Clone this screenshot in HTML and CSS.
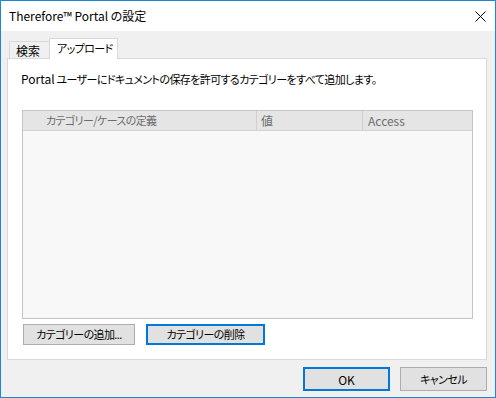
FILE: index.html
```html
<!DOCTYPE html>
<html lang="ja">
<head>
    <meta charset="UTF-8">
    <title>Therefore Portal の設定</title>
    <link rel="stylesheet" href="styles.css">
</head>
<body>
<div class="window">
    <div class="titlebar">
        <span class="title">Therefore™ Portal の設定</span>
        <svg class="close" width="11" height="11" viewBox="0 0 11 11">
            <path d="M0.5 0.5L10.5 10.5M10.5 0.5L0.5 10.5" stroke="#000" stroke-width="1" fill="none"/>
        </svg>
    </div>
    <div class="client">
        <div class="tabs">
            <div class="tab">検索</div>
            <div class="tab active">アップロード</div>
        </div>
        <div class="panel">
            <p class="intro"><span class="latin">Portal</span> ユーザーにドキュメントの保存を許可するカテゴリーをすべて追加します。</p>
            <div class="list">
                <div class="list-head">
                    <div class="col c1">カテゴリー/ケースの定義</div>
                    <div class="col c2">値</div>
                    <div class="col c3 latin">Access</div>
                </div>
                <div class="list-body"></div>
            </div>
            <div class="panel-buttons">
                <button class="btn add">カテゴリーの追加...</button>
                <button class="btn del focus">カテゴリーの削除</button>
            </div>
        </div>
        <div class="footer">
            <button class="btn big focus latin">OK</button>
            <button class="btn big">キャンセル</button>
        </div>
    </div>
</div>
</body>
</html>
```

FILE: styles.css
```css
*{margin:0;padding:0;box-sizing:border-box}
body{
    background:#fff;
    font-family:"Noto Sans CJK JP","Noto Sans",sans-serif;
    font-size:11px;
    letter-spacing:-0.6px;
    font-feature-settings:"palt";
    color:#000;
}
.latin{font-size:12px;letter-spacing:0}
.window{
    width:496px;
    height:398px;
    border:1px solid #1c86d9;
    display:flex;
    flex-direction:column;
}
/*タイトルバー*/
.titlebar{
    height:30px;
    background:#fff;
    display:flex;
    align-items:center;
    justify-content:space-between;
    padding:0 9px 0 8px;
}
.title{font-size:12px;line-height:16px;letter-spacing:0}
.close{display:block}
/*本体*/
.client{
    flex:1;
    background:#f0f0f0;
    padding:7px 8px 0 6px;
}
.tabs{
    display:flex;
    align-items:flex-end;
    height:20px;
    margin-left:2px;
}
.tab{
    flex-shrink:0;
    white-space:nowrap;
    height:17px;
    width:40px;
    border:1px solid #d9d9d9;
    border-right:none;
    border-bottom:none;
    background:#f0f0f0;
    padding-left:6px;
    font-size:12px;
    letter-spacing:0;
    line-height:17px;
}
.tab.active{
    position:relative;
    z-index:1;
    width:69px;
    height:21px;
    margin-bottom:-1px;
    border-right:1px solid #d9d9d9;
    background:#fff;
    padding-left:7px;
    font-size:11px;
    letter-spacing:-0.6px;
    line-height:19px;
}
.panel{
    width:480px;
    height:302px;
    background:#fff;
    border:1px solid #d9d9d9;
    padding:12px 13px 0 13px;
}
.intro{line-height:16px;height:16px;white-space:nowrap}
.list{
    margin-top:23px;
    margin-left:1px;
    width:451px;
    height:209px;
    border:1px solid #c4c4c4;
    background:#f8f8f8;
    display:flex;
    flex-direction:column;
}
.list-head{
    display:flex;
    height:20px;
    background:#e5e5e5;
    border-bottom:1px solid #d2d2d2;
    color:#6d6d6d;
}
.col{line-height:19px;border-right:1px solid #cfcfcf;white-space:nowrap}
.c1{width:234px;padding-left:23px}
.c2{width:106px;padding-left:4px;font-size:12px}
.c3{flex:1;padding-left:5px;border-right:none}
.list-body{flex:1}
.panel-buttons{
    display:flex;
    gap:11px;
    margin-top:5px;
    padding-left:2px;
}
.btn{
    font-family:inherit;
    font-size:11px;
    letter-spacing:-0.6px;
    font-feature-settings:"palt";
    color:#000;
    background:#e1e1e1;
    border:1px solid #adadad;
    height:21px;
    line-height:17px;
    white-space:nowrap;
}
.btn.focus{border:2px solid #0078d7}
.btn.latin{font-size:12px;letter-spacing:0}
.add{width:112px}
.del{width:119px}
.footer{
    display:flex;
    justify-content:flex-end;
    gap:10px;
    margin-top:7px;
}
.btn.big{width:87px;height:24px}
```
